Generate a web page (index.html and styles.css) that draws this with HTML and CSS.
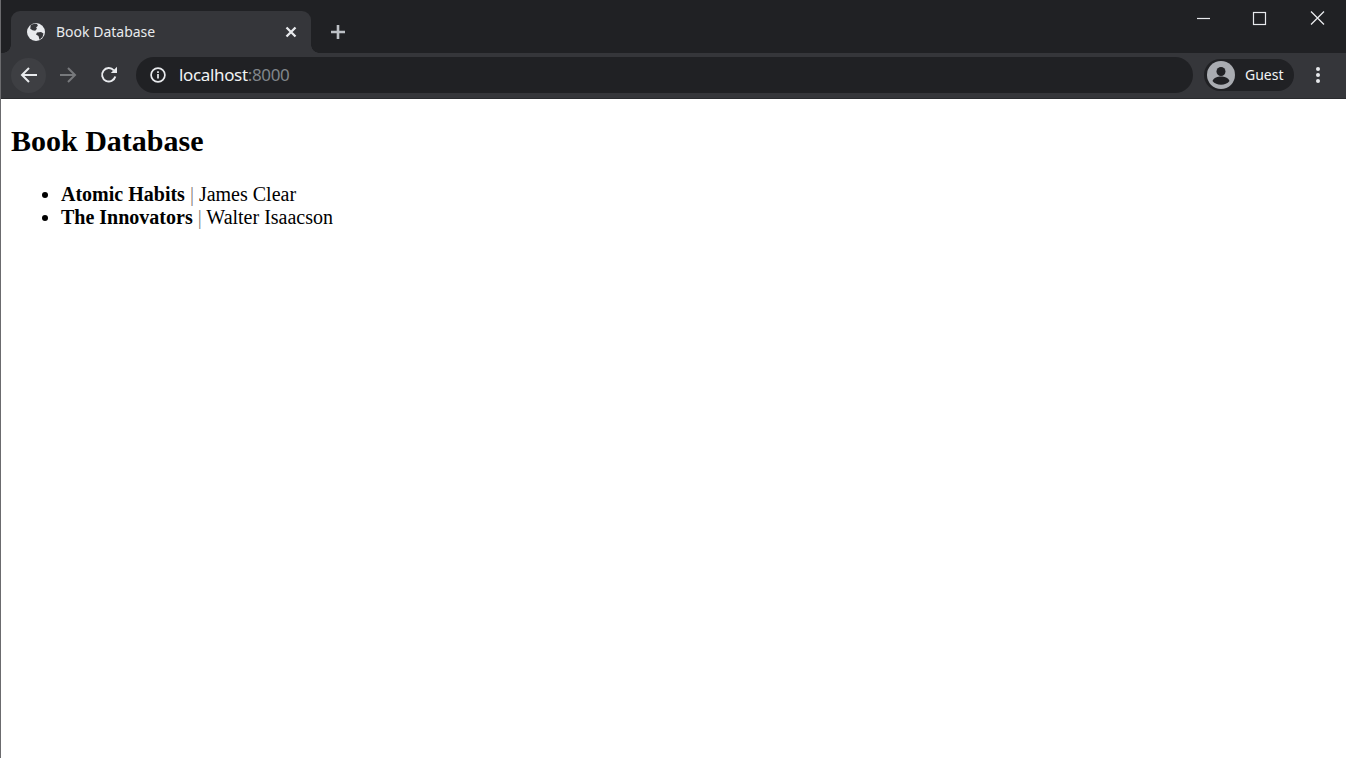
FILE: index.html
```html
<!DOCTYPE html>
<html lang="en">
<head>
<meta charset="utf-8">
<title>Book Database</title>
<link rel="stylesheet" href="styles.css">
</head>
<body>
<div class="window">
  <header class="tabstrip">
    <div class="tab">
      <svg class="favicon" viewBox="0 0 18 18"><circle cx="9" cy="9" r="9" fill="#e8eaed"/><path d="M3 2.500 C5 1 8 .5 10 1 L11 3 L9 5 L10 6.500 L8 8.500 L5 8 L2.500 6.500 Z" fill="#35363a" transform="translate(1 0) scale(.9)"/><path d="M10 9.500 L14 9 L16.500 10.500 L15.500 14 L12.500 16.800 L11.500 13 L9 11.500 Z" fill="#35363a"/></svg>
      <span class="tab-title">Book Database</span>
      <svg class="tab-close" viewBox="0 0 12 12"><path d="M1.500 1.500 10.500 10.500M10.500 1.500 1.500 10.500" stroke="#e8eaed" stroke-width="2.300" fill="none"/></svg>
    </div>
    <svg class="new-tab" viewBox="0 0 16 16"><path d="M8 1V15M1 8H15" stroke="#bdc1c6" stroke-width="2.600" fill="none"/></svg>
    <div class="window-controls">
      <svg class="win-btn" viewBox="0 0 56 36"><path d="M19 18.500H32" stroke="#e8eaed" stroke-width="1.200" fill="none"/></svg>
      <svg class="win-btn" viewBox="0 0 56 36"><rect x="19.500" y="12.500" width="12" height="12" stroke="#e8eaed" stroke-width="1.200" fill="none"/></svg>
      <svg class="win-btn" viewBox="0 0 56 36"><path d="M21 11.500 34 24.500M34 11.500 21 24.500" stroke="#e8eaed" stroke-width="1.300" fill="none"/></svg>
    </div>
  </header>
  <nav class="toolbar">
    <div class="nav-btn nav-btn-active">
      <svg viewBox="0 0 18 18"><path d="M17 9H2M9 2 2 9l7 7" stroke="#e8eaed" stroke-width="2" fill="none"/></svg>
    </div>
    <div class="nav-btn">
      <svg viewBox="0 0 18 18"><path d="M1 9H16M9 2l7 7-7 7" stroke="#77797c" stroke-width="2" fill="none"/></svg>
    </div>
    <div class="nav-btn nav-btn-reload">
      <svg viewBox="0 0 18 18"><path d="M15.300 10.500A6.700 6.700 0 1 1 13.800 4.300" stroke="#e8eaed" stroke-width="2" fill="none"/><path d="M10.800 7H17V.800Z" fill="#e8eaed"/></svg>
    </div>
    <div class="omnibox">
      <svg class="info" viewBox="0 0 16 16"><circle cx="8" cy="8" r="6.900" stroke="#e8eaed" stroke-width="1.700" fill="none"/><path d="M8 7v4.500M8 4.300v1.700" stroke="#e8eaed" stroke-width="1.700" fill="none"/></svg>
      <span class="url">localhost<span class="url-port">:8000</span></span>
    </div>
    <div class="profile">
      <svg class="avatar" viewBox="0 0 28 28"><circle cx="14" cy="14" r="14" fill="#a9acb1"/><circle cx="14" cy="10.500" r="4.500" fill="#202124"/><path d="M5.500 20c1.500-3.500 5-4.500 8.500-4.500s7 1 8.500 4.500c-2 2.500-5 3.800-8.500 3.800S7.500 22.500 5.500 20Z" fill="#202124"/></svg>
      <span class="profile-name">Guest</span>
    </div>
    <svg class="menu" viewBox="0 0 4 16"><circle cx="2" cy="2" r="2" fill="#e8eaed"/><circle cx="2" cy="8" r="2" fill="#e8eaed"/><circle cx="2" cy="14" r="2" fill="#e8eaed"/></svg>
  </nav>
  <main class="page">
    <h1 class="page-title">Book Database</h1>
    <ul class="books">
      <li><strong>Atomic Habits</strong> <span class="sep">|</span> James Clear</li>
      <li><strong>The Innovators</strong> <span class="sep">|</span> Walter Isaacson</li>
    </ul>
  </main>
</div>
</body>
</html>
```

FILE: styles.css
```css
* { box-sizing: border-box; }
html, body { margin: 0; height: 100%; overflow: hidden; background: #fff; }
.window {
  display: flex;
  flex-direction: column;
  height: 758px;
  border-left: 1px solid #6b6b6e;
}
.tabstrip {
  display: flex;
  align-items: flex-end;
  height: 53px;
  padding-left: 10px;
  background: #202124;
}
.tab {
  position: relative;
  display: flex;
  align-items: center;
  width: 300px;
  height: 42px;
  padding: 0 14px 0 16px;
  background: #35363a;
  border-radius: 9px 9px 0 0;
}
.tab::before,
.tab::after {
  content: "";
  position: absolute;
  bottom: 0;
  width: 8px;
  height: 8px;
  background: radial-gradient(circle at 100% 0, #202124 7.500px, #35363a 8px);
}
.tab::before {
  left: -8px;
  transform: scaleX(-1);
}
.tab::after { right: -8px; }
.favicon { width: 18px; height: 18px; flex: none; }
.tab-title {
  flex: 1;
  margin-left: 11px;
  font: 14px/20px "Noto Sans", sans-serif;
  color: #e8eaed;
}
.tab-close { width: 12px; height: 12px; flex: none; }
.new-tab { width: 16px; height: 16px; margin: 0 0 13px 19px; flex: none; }
.window-controls { display: flex; align-self: flex-start; margin-left: auto; }
.win-btn { width: 56px; height: 36px; display: block; }
.toolbar {
  display: flex;
  align-items: center;
  height: 46px;
  padding: 0 26px 1px 10px;
  background: #35363a;
  border-bottom: 1px solid #2a2b2e;
}
.nav-btn {
  display: flex;
  align-items: center;
  justify-content: center;
  width: 35px;
  height: 35px;
  margin-right: 4px;
  border-radius: 50%;
}
.nav-btn svg { width: 18px; height: 18px; }
.nav-btn-active { background: #3e3f43; }
.nav-btn-reload { margin-left: 2px; }
.omnibox {
  display: flex;
  align-items: center;
  flex: 1;
  height: 36px;
  margin-left: 6px;
  padding-left: 14px;
  background: #202124;
  border-radius: 18px;
}
.info { width: 16px; height: 16px; flex: none; }
.url {
  margin-left: 13px;
  font: 17px/22px "Noto Sans", sans-serif;
  letter-spacing: -.35px;
  color: #f1f3f4;
}
.url-port { color: #80868b; }
.profile {
  display: flex;
  align-items: center;
  width: 90px;
  height: 32px;
  margin-left: 11px;
  padding-left: 3px;
  background: #202124;
  border-radius: 16px;
}
.avatar { width: 28px; height: 28px; flex: none; }
.profile-name {
  margin-left: 10px;
  font: 14px/20px "Noto Sans", sans-serif;
  color: #f1f3f4;
}
.menu { width: 4px; height: 16px; margin-left: 22px; flex: none; }
.page {
  flex: 1;
  padding: 0 10px;
  font: 20px/23px "Liberation Serif", "Times New Roman", serif;
  color: #000;
}
.page-title {
  margin: 24px 0 25px;
  font-size: 30px;
  line-height: 35px;
  font-weight: bold;
}
.books { margin: 0; padding-left: 50px; }
.sep { color: #85807a; }
```
